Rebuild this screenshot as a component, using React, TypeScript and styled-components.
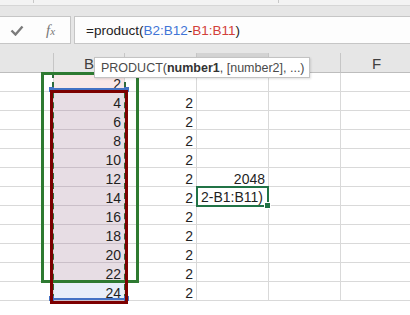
import React from 'react'
import styled, { createGlobalStyle } from 'styled-components'

const GlobalStyle = createGlobalStyle`
    html, body {
        margin: 0;
        padding: 0;
        background: #ffffff;
    }
    body {
        font-family: "Liberation Sans", Arial, sans-serif;
    }
`

type Fill = 'red' | 'mix' | 'blue' | undefined

const COLS = [54, 71, 72, 72, 72, 72]
// C, D and E sit under the function tooltip, so no letter is drawn for them
const HEADERS = ['', 'B', '', '', '', 'F']
const ACTIVE_COL = 3
const B_VALUES = [2, 4, 6, 8, 10, 12, 14, 16, 18, 20, 22, 24]

const fillFor = (row: number): Fill => {
    if (row === 0) return 'red'
    if (row === 11) return 'blue'
    return 'mix'
}

const App: React.FunctionComponent = () => (
    <>
        <GlobalStyle />
        <Window>
            <TopStrip>
                <Tick style={{ left: 33 }} />
                <Tick style={{ left: 278 }} />
            </TopStrip>
            <FormulaBand>
                <IconBox>
                    <svg width="14" height="11" viewBox="0 0 14 11">
                        <path d="M1.5 5.5 L5.5 9.5 L12.5 1.5" fill="none" stroke="#7b7b7b" strokeWidth="2.4" />
                    </svg>
                    <Fx>
                        f<small>x</small>
                    </Fx>
                </IconBox>
                <FormulaInput>
                    <span>=product(</span>
                    <Ref $color="#3f74d6">B2:B12</Ref>
                    <span>-</span>
                    <Ref $color="#d2403a">B1:B11</Ref>
                    <span>)</span>
                </FormulaInput>
            </FormulaBand>
            <Sheet>
                <Grid>
                    {HEADERS.map((h, i) => (
                        <HeaderCell key={i} $active={i === ACTIVE_COL}>
                            {h}
                        </HeaderCell>
                    ))}
                    {B_VALUES.map((b, r) => (
                        <React.Fragment key={r}>
                            <Cell />
                            <Cell $fill={fillFor(r)}>{b}</Cell>
                            <Cell>{r > 0 ? 2 : ''}</Cell>
                            {r === 6 ? (
                                <EditCell>
                                    2-B1:B11)
                                    <FillHandle />
                                </EditCell>
                            ) : (
                                <Cell>{r === 5 ? 2048 : ''}</Cell>
                            )}
                            <Cell />
                            <Cell />
                        </React.Fragment>
                    ))}
                </Grid>
                <RefDashes />
                <BlueRef>
                    <Handle style={{ left: -3, top: -3 }} />
                    <Handle style={{ right: -3, top: -3 }} />
                    <Handle style={{ left: -3, bottom: -3 }} />
                    <Handle style={{ right: -3, bottom: -3 }} />
                </BlueRef>
                <GreenMark />
                <RedMark />
                <Tooltip>
                    PRODUCT(<b>number1</b>, [number2], ...)
                </Tooltip>
            </Sheet>
        </Window>
    </>
)

export default App

const Window = styled.div`
    width: 410px;
    height: 315px;
    overflow: hidden;
    background: #ffffff;
    display: flex;
    flex-direction: column;
`
const TopStrip = styled.div`
    position: relative;
    height: 5px;
    flex-shrink: 0;
    background: #f3f3f3;
    border-bottom: 1px solid #d6d6d6;
`
const Tick = styled.div`
    position: absolute;
    top: 0;
    width: 1px;
    height: 3px;
    background: #c8c8c8;
`
const FormulaBand = styled.div`
    display: flex;
    flex-direction: row;
    gap: 3px;
    padding: 10px 0 9px 0;
    background: #e6e6e6;
    flex-shrink: 0;
`
const IconBox = styled.div`
    width: 71px;
    height: 28px;
    box-sizing: border-box;
    display: flex;
    align-items: center;
    padding-left: 10px;
    background: #fdfdfd;
    border: 1px solid #c6c6c6;
    border-left: none;
    svg {
        margin-top: 1px;
    }
`
const Fx = styled.span`
    margin-left: 22px;
    font-family: "Liberation Serif", "Times New Roman", serif;
    font-style: italic;
    font-size: 15px;
    color: #777777;
    small {
        font-size: 11px;
    }
`
const FormulaInput = styled.div`
    flex: 1;
    height: 28px;
    box-sizing: border-box;
    display: flex;
    align-items: center;
    padding-left: 11px;
    background: #fdfdfd;
    border: 1px solid #c6c6c6;
    border-right: none;
    font-size: 13.5px;
    color: #222222;
    white-space: pre;
`
const Ref = styled.span<{ $color: string }>`
    color: ${({ $color }) => $color};
`
const Sheet = styled.div`
    position: relative;
    flex: 1;
`
const Grid = styled.div`
    display: grid;
    grid-template-columns: ${COLS.map((c) => `${c}px`).join(' ')};
    grid-auto-rows: 19px;
    grid-template-rows: 20px;
`
const HeaderCell = styled.div<{ $active?: boolean }>`
    box-sizing: border-box;
    display: flex;
    align-items: center;
    justify-content: center;
    padding-top: 1px;
    background: ${({ $active }) => ($active ? '#d3d3d3' : '#e6e6e6')};
    border-right: 1px solid #c6c6c6;
    border-bottom: ${({ $active }) => ($active ? '2px solid #217346' : '1px solid #bdbdbd')};
    font-size: 15px;
    color: #404040;
`
const fills: Record<string, string> = {
    red: '#f8e8e8',
    mix: '#e7dde4',
    blue: '#e8eef9',
}
const Cell = styled.div<{ $fill?: Fill }>`
    box-sizing: border-box;
    display: flex;
    align-items: flex-end;
    justify-content: flex-end;
    padding-right: 3px;
    overflow: hidden;
    white-space: nowrap;
    background: ${({ $fill }) => ($fill ? fills[$fill] : '#ffffff')};
    border-right: 1px solid #d9d9d9;
    border-bottom: 1px solid ${({ $fill }) => ($fill ? '#cabfc8' : '#d9d9d9')};
    font-size: 14px;
    line-height: 14px;
    color: #1f1f1f;
`
const EditCell = styled.div`
    position: relative;
    box-sizing: border-box;
    display: flex;
    align-items: center;
    margin: -1px 0 -1px -1px;
    padding-left: 3px;
    background: #ffffff;
    border: 2px solid #217346;
    font-size: 14px;
    color: #1f1f1f;
    white-space: nowrap;
    z-index: 2;
`
const FillHandle = styled.div`
    position: absolute;
    right: -4px;
    bottom: -4px;
    width: 5px;
    height: 5px;
    background: #217346;
    border: 1px solid #ffffff;
`
const RefDashes = styled.div`
    position: absolute;
    left: 52px;
    top: 19px;
    width: 74px;
    height: 228px;
    box-sizing: border-box;
    border-left: 2px dashed #2f6b3c;
    border-right: 2px dashed #2f6b3c;
`
const BlueRef = styled.div`
    position: absolute;
    left: 52px;
    top: 35px;
    width: 74px;
    height: 212px;
    box-sizing: border-box;
    border-top: 2px solid #4472c4;
    border-bottom: 2px solid #4472c4;
`
const Handle = styled.div`
    position: absolute;
    width: 5px;
    height: 5px;
    background: #4472c4;
`
const GreenMark = styled.div`
    position: absolute;
    left: 41px;
    top: 19px;
    width: 98px;
    height: 211px;
    box-sizing: border-box;
    border: 3px solid #2e7a31;
`
const RedMark = styled.div`
    position: absolute;
    left: 50px;
    top: 37px;
    width: 78px;
    height: 214px;
    box-sizing: border-box;
    border: 3px solid #7d0000;
`
const Tooltip = styled.div`
    position: absolute;
    left: 94px;
    top: 4px;
    width: 216px;
    height: 21px;
    box-sizing: border-box;
    display: flex;
    align-items: center;
    padding-left: 6px;
    background: #ffffff;
    border: 1px solid #c3c3c3;
    box-shadow: 1px 1px 2px rgba(0, 0, 0, 0.12);
    font-size: 12.5px;
    color: #4a4a4a;
    white-space: pre;
    b {
        color: #333333;
    }
`
